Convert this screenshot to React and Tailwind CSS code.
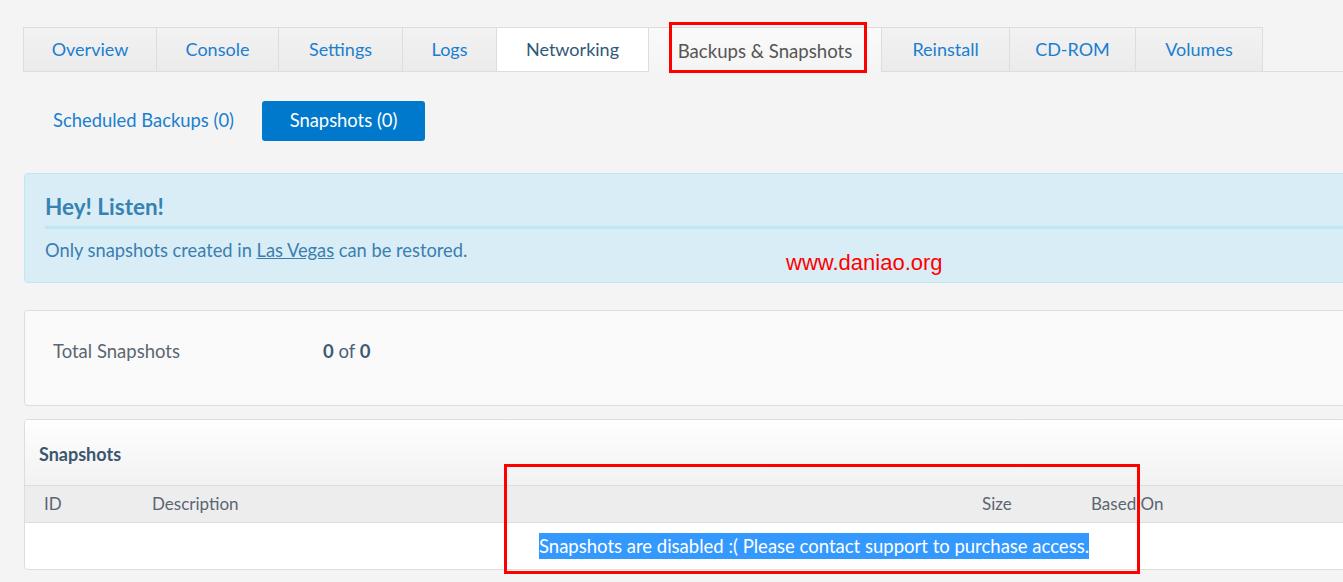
import { useState } from "react";

const tabs = [
  { label: "Overview", w: "w-[134px]" },
  { label: "Console", w: "w-[123px]" },
  { label: "Settings", w: "w-[125px]" },
  { label: "Logs", w: "w-[95px]" },
  { label: "Networking", w: "w-[153px]", state: "white" },
  { label: "Backups & Snapshots", w: "w-[234px]", state: "active" },
  { label: "Reinstall", w: "w-[129px]" },
  { label: "CD-ROM", w: "w-[127px]" },
  { label: "Volumes", w: "w-[128px]" },
];

export default function App() {
  const [sub, setSub] = useState("snapshots");

  return (
    <div className="relative w-full h-[582px] overflow-hidden bg-[#f4f4f4] font-['Lato',sans-serif] text-[18px]">
      <div className="w-[1400px] pl-[23px] pt-[27px]">
        {/* tab bar */}
        <div className="flex border-b border-[#dddddd] h-[45px]">
          {tabs.map((t) => (
            <div
              key={t.label}
              className={`${t.w} shrink-0 h-[45px] flex items-center justify-center border border-[#dddddd] -ml-px first:ml-0 ${
                t.state === "active"
                  ? "bg-gradient-to-b from-[#fafafa] to-[#f4f4f4] text-[#555555] border-b-[#f4f4f4] h-[46px] pt-[4px] text-[18.6px]"
                  : t.state === "white"
                  ? "bg-white text-[#2f5878]"
                  : "bg-gradient-to-b from-[#f2f2f2] to-[#ebebeb] text-[#1a7fd0]"
              }`}
            >
              {t.label}
            </div>
          ))}
        </div>

        {/* sub tabs */}
        <div className="flex items-center gap-[28px] mt-[29px] pl-[30px] text-[18.4px]">
          <button
            onClick={() => setSub("scheduled")}
            className="text-[#1a7fd0]"
          >
            Scheduled Backups (0)
          </button>
          <button
            onClick={() => setSub("snapshots")}
            className={`w-[163px] h-[40px] rounded-[3px] ${
              sub === "snapshots" ? "bg-[#0079cc] text-white" : "text-[#1a7fd0]"
            }`}
          >
            Snapshots (0)
          </button>
        </div>

        {/* alert */}
        <div className="mt-[32px] ml-px h-[110px] rounded-[4px] border border-[#bfe6f2] bg-[#d9edf7] pl-[20px] pt-[18px] text-[#3a7fae]">
          <h3 className="text-[22.5px] font-bold leading-[30px] text-[#3682b2]">Hey! Listen!</h3>
          <div className="h-[3px] bg-[#bee8f1] mt-[4px]" />
          <p className="mt-[8px] text-[18.3px]">
            Only snapshots created in <span className="underline">Las Vegas</span> can be restored.
          </p>
        </div>

        {/* totals */}
        <div className="mt-[27px] ml-px h-[96px] rounded-[4px] border border-[#dddddd] bg-[#fafafa] flex items-center pl-[28px] pb-[13px] text-[#5d6670] text-[18.5px]">
          <span className="w-[270px]">Total Snapshots</span>
          <span className="text-[#4b6076]">
            <b className="text-[#3e5a75]">0</b> of <b className="text-[#3e5a75]">0</b>
          </span>
        </div>

        {/* snapshots table */}
        <div className="mt-[13px] ml-px rounded-[4px] border border-[#dddddd] bg-white overflow-hidden">
          <div className="h-[66px] bg-gradient-to-b from-[#fefefe] to-[#f2f2f2] border-b border-[#dddddd] flex items-center pl-[14px] pt-[3px]">
            <span className="font-bold text-[#3b566f] text-[18px]">Snapshots</span>
          </div>
          <div className="h-[37px] bg-[#ededed] border-b border-[#dddddd] flex items-center text-[17px] text-[#5b6572]">
            <span className="w-[127px] pl-[19px]">ID</span>
            <span className="w-[830px]">Description</span>
            <span className="w-[109px]">Size</span>
            <span>Based On</span>
          </div>
          <div className="h-[46px] flex items-center pl-[514px]">
            <span className="bg-[#3399ff] text-white text-[18.5px] leading-[26px]">
              Snapshots are disabled :( Please contact support to purchase access.
            </span>
          </div>
        </div>
      </div>

      {/* watermark + annotation boxes */}
      <span className="absolute left-[786px] top-[246px] text-[22px] text-[#ff0000] font-['Liberation_Sans',sans-serif]">
        www.daniao.org
      </span>
      <div className="absolute left-[669px] top-[22px] w-[198px] h-[51px] border-[3px] border-[#ff0000]" />
      <div className="absolute left-[504px] top-[464px] w-[636px] h-[110px] border-[3px] border-[#ff0000]" />
    </div>
  );
}
